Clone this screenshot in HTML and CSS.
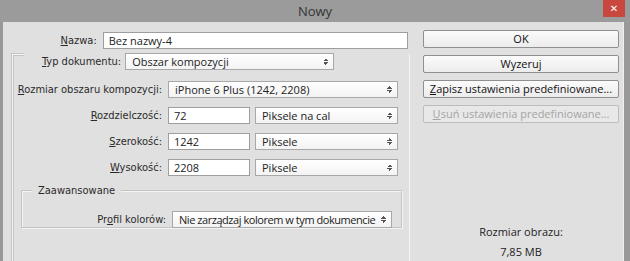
FILE: index.html
```html
<!DOCTYPE html>
<html lang="pl">
<head>
  <meta charset="UTF-8" />
  <title>Nowy</title>
  <link rel="stylesheet" href="styles.css">
</head>
<body>

<div class="window">
  <div class="titlebar">
    <span class="title">Nowy</span>
    <div class="close">&#x2715;</div>
  </div>

  <div class="dialog">
    <div class="form">
      <div class="row name-row">
        <label class="lbl name-lbl"><u>N</u>azwa:</label>
        <div class="field name-field">Bez nazwy-4</div>
      </div>

      <div class="group">
        <div class="legend">
          <label class="lbl"><u>T</u>yp dokumentu:</label>
          <div class="field select type-select">Obszar kompozycji<span class="arrows"></span></div>
        </div>

        <div class="row">
          <label class="lbl col-lbl"><u>R</u>ozmiar obszaru kompozycji:</label>
          <div class="field select size-select">iPhone 6 Plus (1242, 2208)<span class="arrows"></span></div>
        </div>
        <div class="row">
          <label class="lbl col-lbl"><u>R</u>ozdzielczość:</label>
          <div class="field num">72</div>
          <div class="field select unit">Piksele na cal<span class="arrows"></span></div>
        </div>
        <div class="row">
          <label class="lbl col-lbl"><u>S</u>zerokość:</label>
          <div class="field num">1242</div>
          <div class="field select unit">Piksele<span class="arrows"></span></div>
        </div>
        <div class="row">
          <label class="lbl col-lbl"><u>W</u>ysokość:</label>
          <div class="field num">2208</div>
          <div class="field select unit">Piksele<span class="arrows"></span></div>
        </div>

        <div class="advanced">
          <div class="adv-legend">Zaawansowane</div>
          <div class="row">
            <label class="lbl adv-lbl">Pr<u>o</u>fil kolorów:</label>
            <div class="field select profile">Nie zarządzaj kolorem w tym dokumencie<span class="arrows"></span></div>
          </div>
        </div>
      </div>
    </div>

    <div class="side">
      <div class="btn">OK</div>
      <div class="btn">Wyzeruj</div>
      <div class="btn"><u>Z</u>apisz ustawienia predefiniowane...</div>
      <div class="btn disabled"><u>U</u>suń ustawienia predefiniowane...</div>
      <div class="info">
        <div>Rozmiar obrazu:</div>
        <div class="info-size">7,85 MB</div>
      </div>
    </div>
  </div>
</div>

</body>
</html>
```

FILE: styles.css
```css
body {
  margin: 0;
  padding: 0;
  background: #999999;
  font-family: 'DejaVu Sans Condensed', 'DejaVu Sans', sans-serif;
  font-size: 11px;
  color: #2a2a2a;
}

.window {
  width: 630px;
  height: 261px;
  overflow: hidden;
}

.titlebar {
  height: 22px;
  background: #9b9b9b;
  display: flex;
  justify-content: center;
  align-items: center;
  position: relative;
}

.title {
  font-family: 'Open Sans', sans-serif;
  font-size: 13px;
  color: #333;
}

.close {
  position: absolute;
  right: 5px;
  top: 0;
  width: 22px;
  height: 17px;
  background: #c8473f;
  color: #fff;
  font-size: 10px;
  display: flex;
  justify-content: center;
  align-items: center;
  font-family: 'DejaVu Sans', sans-serif;
}

.dialog {
  display: flex;
  margin: 0 6px 0 3px;
  height: 239px;
  background: #e0e0e0;
  border-right: 1px solid #f0f0f0;
}

.form {
  width: 405px;
  padding-top: 10px;
}

.row {
  display: flex;
  align-items: center;
  height: 17px;
}

.lbl u,
.btn u {
  text-decoration: underline;
}

.lbl {
  text-align: right;
  white-space: nowrap;
}

.name-lbl {
  width: 94px;
  padding-right: 6px;
}

.field {
  height: 15px;
  line-height: 15px;
  background: #fff;
  border: 1px solid #9e9e9e;
  padding: 0 5px;
  font-family: 'Open Sans', sans-serif;
  font-size: 11px;
  color: #222;
  white-space: nowrap;
  box-sizing: content-box;
}

.name-field {
  width: 294px;
}

.select {
  position: relative;
  background: linear-gradient(#ffffff, #f3f3f3);
  border-color: #a8a8a8;
  padding-left: 6px;
}

.arrows {
  position: absolute;
  right: 5px;
  top: 4px;
  width: 5px;
  height: 7px;
  background:
    linear-gradient(to bottom right, transparent 50%, #555 50%) left top / 3px 3px no-repeat,
    linear-gradient(to bottom left, transparent 50%, #555 50%) right top / 2px 3px no-repeat,
    linear-gradient(to top right, transparent 50%, #555 50%) left bottom / 3px 3px no-repeat,
    linear-gradient(to top left, transparent 50%, #555 50%) right bottom / 2px 3px no-repeat;
}

.group {
  margin: 5px 0 0 9px;
  width: 396px;
  height: 220px;
  border-left: 1px solid #f4f4f4;
  border-top: 1px solid #f4f4f4;
  border-right: 1px solid #f4f4f4;
  box-shadow: inset 1px 1px 0 #c4c4c4, -1px -1px 0 #c4c4c4;
}

.legend {
  display: inline-flex;
  align-items: center;
  height: 17px;
  margin: -9px 0 0 11px;
  background: #e0e0e0;
  gap: 4px;
  padding-left: 18px;
  padding-right: 75px;
}

.type-select {
  width: 196px;
}

.col-lbl {
  width: 149px;
  padding-right: 6px;
}

.group > .row {
  margin-top: 11px;
}

.size-select {
  width: 217px;
}

.num {
  width: 70px;
}

.unit {
  width: 130px;
  margin-left: 5px;
}

.group > .row + .row {
  margin-top: 9px;
}

.advanced {
  margin: 14px 0 0 8px;
  width: 379px;
  height: 29px;
  border: 1px solid #c4c4c4;
  box-shadow: inset 1px 1px 0 #f4f4f4, 1px 1px 0 #f4f4f4;
  padding-top: 7px;
}

.adv-legend {
  display: inline-block;
  margin: -14px 0 0 10px;
  padding: 0 6px;
  background: #e0e0e0;
  line-height: 14px;
  vertical-align: top;
  height: 14px;
}

.adv-lbl {
  width: 144px;
  padding-right: 6px;
}

.profile {
  width: 207px;
  letter-spacing: -0.45px;
}

.side {
  width: 196px;
  margin-left: 15px;
  padding-top: 8px;
  display: flex;
  flex-direction: column;
  gap: 7px;
}

.btn {
  height: 16px;
  line-height: 16px;
  border: 1px solid #8f8f8f;
  border-radius: 2px;
  background: linear-gradient(#fbfbfb, #ececec);
  text-align: center;
  font-family: 'Open Sans', sans-serif;
  font-size: 11px;
  color: #111;
}

.btn.disabled {
  color: #a4a4a4;
  border-color: #bcbcbc;
  background: #e8e8e8;
}

.info {
  margin-top: 94px;
  text-align: center;
  font-family: 'Open Sans', sans-serif;
  font-size: 11px;
  color: #222;
}

.info-size {
  margin-top: 5px;
}
```
